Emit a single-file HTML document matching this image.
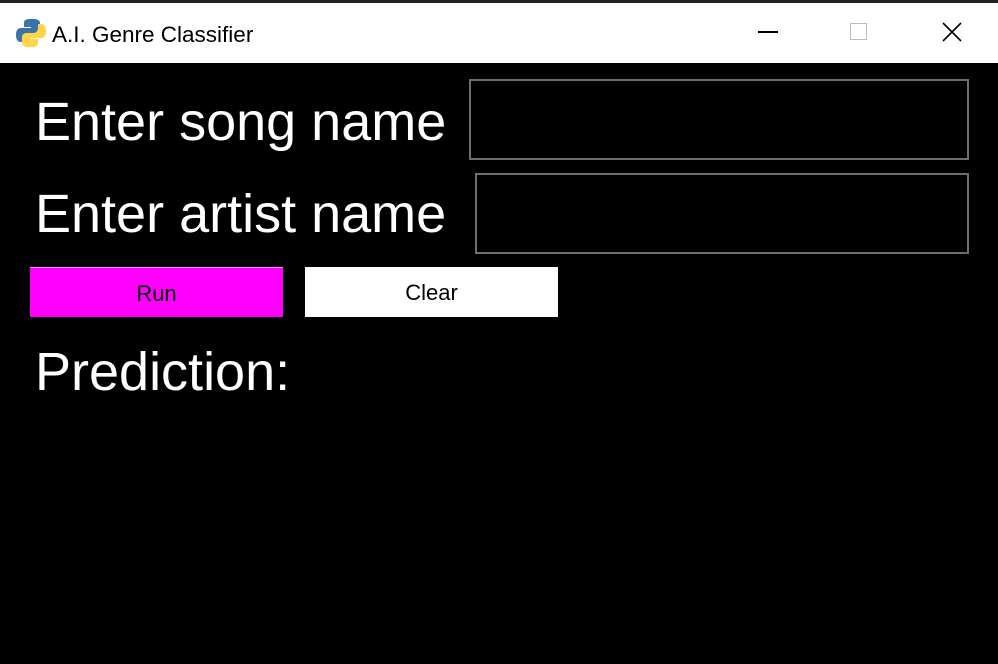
<!DOCTYPE html>
<html><head><style>
body{margin:0;width:998px;height:664px;background:#000;overflow:hidden;position:relative;font-family:"Liberation Sans",sans-serif}
.tb{position:absolute;left:0;top:3px;width:998px;height:60px;background:#fff}
.top{position:absolute;left:0;top:0;width:998px;height:3px;background:#222}
.t{position:absolute;left:52px;top:19px;font-size:22.5px;color:#000}
.lbl{position:absolute;color:#fff;font-size:54px;white-space:nowrap;letter-spacing:0px}
.box{position:absolute;border:2px solid #6e6e6e;box-sizing:border-box}
.btn{position:absolute;top:267px;width:253px;height:50px;font-size:22px;text-align:center;line-height:52px;color:#000}
</style></head><body>
<div class="top"></div>
<div class="tb">
<svg style="position:absolute;left:15px;top:14px" width="32" height="32" viewBox="0 0 32 32">
<path d="M15 2c-6 0-6 3-6 4v4h7v1H6c-3 0-5 2-5 7s2 7 5 7h3v-4c0-3 2-5 5-5h7c2 0 4-2 4-4V6c0-2-2-4-6-4z" fill="#3a73a8"/>
<path d="M17 30c6 0 6-3 6-4v-4h-7v-1h10c3 0 5-2 5-7s-2-7-5-7h-3v4c0 3-2 5-5 5h-7c-2 0-4 2-4 4v6c0 2 2 4 6 4z" fill="#fdd44a"/>
</svg>
<div class="t">A.I. Genre Classifier</div>
<div style="position:absolute;left:758px;top:28px;width:20px;height:2px;background:#000"></div>
<div style="position:absolute;left:850px;top:20px;width:17px;height:17px;border:1px solid #bbb;box-sizing:border-box"></div>
<svg style="position:absolute;left:942px;top:19px" width="20" height="20"><path d="M1 1L19 19M19 1L1 19" stroke="#000" stroke-width="1.6"/></svg>
</div>
<div class="lbl" style="left:35px;top:91px">Enter song name</div>
<div class="lbl" style="left:35px;top:183px">Enter artist name</div>
<div class="lbl" style="left:35px;top:341px">Prediction:</div>
<div class="box" style="left:469px;top:79px;width:500px;height:81px"></div>
<div class="box" style="left:475px;top:173px;width:494px;height:81px"></div>
<div class="btn" style="left:30px;background:#f0f;border-top:1px solid #ff7fff;box-sizing:border-box">Run</div>
<div class="btn" style="left:305px;background:#fff">Clear</div>
</body></html>
